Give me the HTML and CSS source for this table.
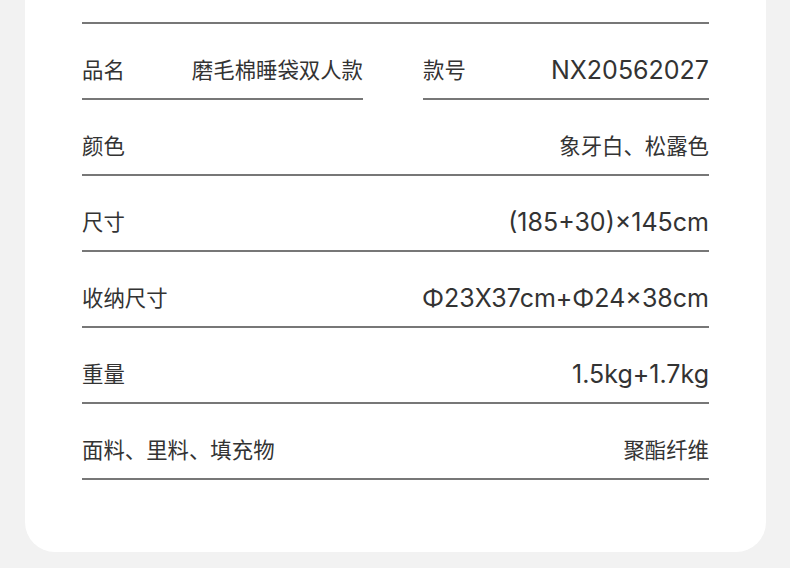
FILE: index.html
```html
<!DOCTYPE html>
<html lang="zh-CN">
<head>
    <meta charset="UTF-8">
    <meta name="viewport" content="width=device-width, initial-scale=1.0">
    <title>产品参数</title>
    <link rel="stylesheet" href="styles.css">
</head>
<body>
    <div class="card">
        <div class="specs">
            <div class="row split">
                <div class="cell first">
                    <span class="label">品名</span>
                    <span class="value">磨毛棉睡袋双人款</span>
                </div>
                <div class="cell second">
                    <span class="label">款号</span>
                    <span class="value num">NX20562027</span>
                </div>
            </div>
            <div class="row">
                <span class="label">颜色</span>
                <span class="value">象牙白、松露色</span>
            </div>
            <div class="row">
                <span class="label">尺寸</span>
                <span class="value num">(185+30)×145cm</span>
            </div>
            <div class="row">
                <span class="label">收纳尺寸</span>
                <span class="value num">Φ23X37cm+Φ24×38cm</span>
            </div>
            <div class="row">
                <span class="label">重量</span>
                <span class="value num">1.5kg+1.7kg</span>
            </div>
            <div class="row">
                <span class="label">面料、里料、填充物</span>
                <span class="value">聚酯纤维</span>
            </div>
        </div>
    </div>
</body>
</html>
```

FILE: styles.css
```css
/* Reset básico */
body, div, span {
    margin: 0;
    padding: 0;
    box-sizing: border-box;
}

body {
    background: #f2f2f2;
    font-family: Inter, "Noto Sans CJK SC", sans-serif;
    color: #333;
    height: 568px;
    overflow: hidden;
}

/* Cartão branco */
.card {
    margin-left: 25px;
    width: 741px;
    background: #fff;
    border-radius: 0 0 30px 30px;
    padding: 22px 57px 72px;
}

.specs {
    border-top: 2px solid #777;
}

.row,
.cell {
    display: flex;
    justify-content: space-between;
    align-items: center;
    padding: 35px 0 17px;
    border-bottom: 2px solid #777;
    line-height: 22px;
}

.row.split {
    padding: 0;
    border-bottom: none;
}

.cell.first {
    width: 281px;
}

.cell.second {
    width: 286px;
}

.label,
.value {
    font-size: 21.4px;
    white-space: nowrap;
}

.value.num {
    font-size: 25px;
}
```
